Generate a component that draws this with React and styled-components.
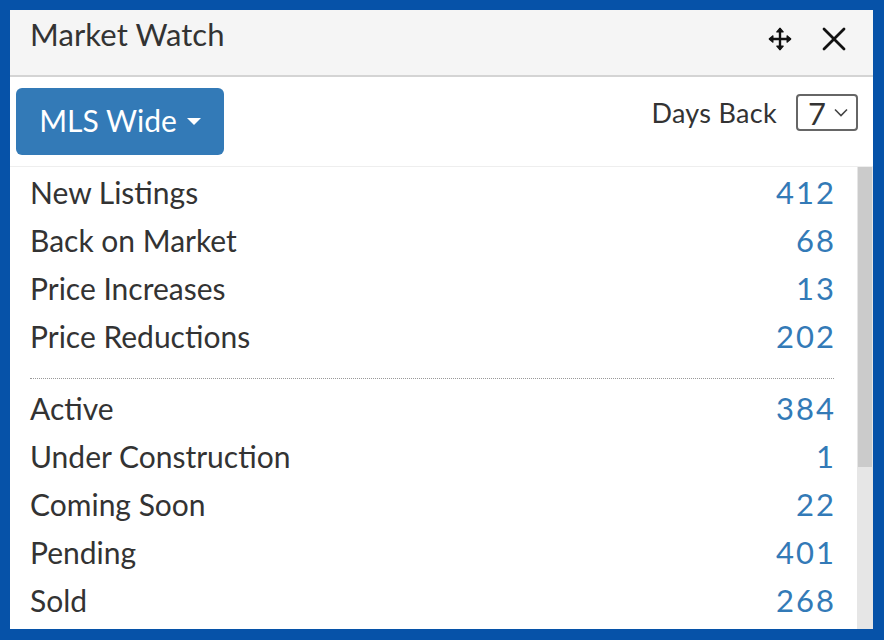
import React from 'react';
import styled, { createGlobalStyle } from 'styled-components';

const GlobalStyle = createGlobalStyle`
  html, body {
    margin: 0;
    padding: 0;
    background: #0652a8;
  }
  body {
    font-family: Lato, "Open Sans", sans-serif;
  }
`

const Frame = styled.div`
  width: 884px;
  height: 640px;
  box-sizing: border-box;
  padding: 10px 11px 11px 10px;
  background: #0652a8;
`

const Panel = styled.div`
  width: 100%;
  height: 100%;
  background: #fff;
  display: flex;
  flex-direction: column;
  overflow: hidden;
`

const Header = styled.div`
  height: 67px;
  box-sizing: border-box;
  flex-shrink: 0;
  display: flex;
  align-items: flex-start;
  justify-content: space-between;
  padding: 5px 27px 0 20px;
  background: #f5f5f5;
  border-bottom: 2px solid #d4d4d4;
`

const Title = styled.div`
  font-size: 31px;
  color: #333;
  letter-spacing: 0.1px;
`

const Tools = styled.div`
  display: flex;
  align-items: center;
  gap: 29px;
  margin-top: 11px;
`

const Toolbar = styled.div`
  flex-shrink: 0;
  display: flex;
  justify-content: space-between;
  align-items: flex-start;
  padding: 11px 15px 11px 6px;
  border-bottom: 1px solid #eee;
`

const DropButton = styled.button`
  height: 67px;
  width: 208px;
  border: none;
  border-radius: 6px;
  background: #337ab7;
  color: #fff;
  font-family: inherit;
  font-size: 30px;
  display: flex;
  align-items: center;
  justify-content: center;
  gap: 10px;
  padding: 0 0 3px 0;
`

const Caret = styled.span`
  width: 0;
  height: 0;
  border-left: 7px solid transparent;
  border-right: 7px solid transparent;
  border-top: 7px solid #fff;
  margin-top: 3px;
`

const DaysBack = styled.div`
  display: flex;
  align-items: center;
  gap: 19px;
  margin-top: 6px;
  font-size: 27px;
  letter-spacing: 0.3px;
  color: #333;
`

const Select = styled.div`
  width: 62px;
  height: 37px;
  box-sizing: border-box;
  border: 2px solid #666;
  border-radius: 4px;
  display: flex;
  align-items: center;
  padding-left: 10px;
  gap: 8px;
  font-size: 31px;
  color: #333;
`

const Body = styled.div`
  flex: 1;
  display: flex;
  min-height: 0;
`

const List = styled.div`
  flex: 1;
  padding: 1px 23px 0 20px;
`

const Row = styled.div`
  height: 48px;
  display: flex;
  align-items: center;
  justify-content: space-between;
  font-size: 30px;
`

const Label = styled.span`
  color: #333;
`

const Count = styled.span`
  color: #337ab7;
  font-size: 31px;
  letter-spacing: 2px;
  margin-right: -2px;
`

const Divider = styled.div`
  border-top: 1px dotted #999;
  margin: 18px 0 5px 0;
`

const Track = styled.div`
  width: 16px;
  flex-shrink: 0;
  background: #e6e6e6;
  display: flex;
  flex-direction: column;
  align-items: center;
`

const Thumb = styled.div`
  width: 14px;
  height: 300px;
  background: #cbcbcb;
`

const MoveIcon = () => (
  <svg width="26" height="26" viewBox="0 0 24 24" fill="none" stroke="#111" strokeWidth="2.2" strokeLinecap="round">
    <line x1="12" y1="3" x2="12" y2="21" />
    <line x1="3" y1="12" x2="21" y2="12" />
    <path d="M9 5.5 L12 2 L15 5.5 Z M9 18.5 L12 22 L15 18.5 Z M5.5 9 L2 12 L5.5 15 Z M18.5 9 L22 12 L18.5 15 Z" fill="#111" strokeWidth="1" strokeLinejoin="round" />
  </svg>
)

const CloseIcon = () => (
  <svg width="24" height="24" viewBox="0 0 24 24" stroke="#111" strokeWidth="2.8" strokeLinecap="round">
    <line x1="2" y1="2" x2="22" y2="22" />
    <line x1="22" y1="2" x2="2" y2="22" />
  </svg>
)

const ChevronDown = () => (
  <svg width="14" height="9" viewBox="0 0 14 9" fill="none" stroke="#444" strokeWidth="1.6">
    <polyline points="1,1.5 7,7.5 13,1.5" />
  </svg>
)

const listings = [
  ['New Listings', 412],
  ['Back on Market', 68],
  ['Price Increases', 13],
  ['Price Reductions', 202],
]

const statuses = [
  ['Active', 384],
  ['Under Construction', 1],
  ['Coming Soon', 22],
  ['Pending', 401],
  ['Sold', 268],
]

const App = () => {
  return (
    <>
      <GlobalStyle />
      <Frame>
        <Panel>
          <Header>
            <Title>Market Watch</Title>
            <Tools>
              <MoveIcon />
              <CloseIcon />
            </Tools>
          </Header>
          <Toolbar>
            <DropButton>
              MLS Wide <Caret />
            </DropButton>
            <DaysBack>
              Days Back
              <Select>
                7 <ChevronDown />
              </Select>
            </DaysBack>
          </Toolbar>
          <Body>
            <List>
              {listings.map(([name, n]) => (
                <Row key={name}>
                  <Label>{name}</Label>
                  <Count>{n}</Count>
                </Row>
              ))}
              <Divider />
              {statuses.map(([name, n]) => (
                <Row key={name}>
                  <Label>{name}</Label>
                  <Count>{n}</Count>
                </Row>
              ))}
            </List>
            <Track>
              <Thumb />
            </Track>
          </Body>
        </Panel>
      </Frame>
    </>
  )
}

export default App;
